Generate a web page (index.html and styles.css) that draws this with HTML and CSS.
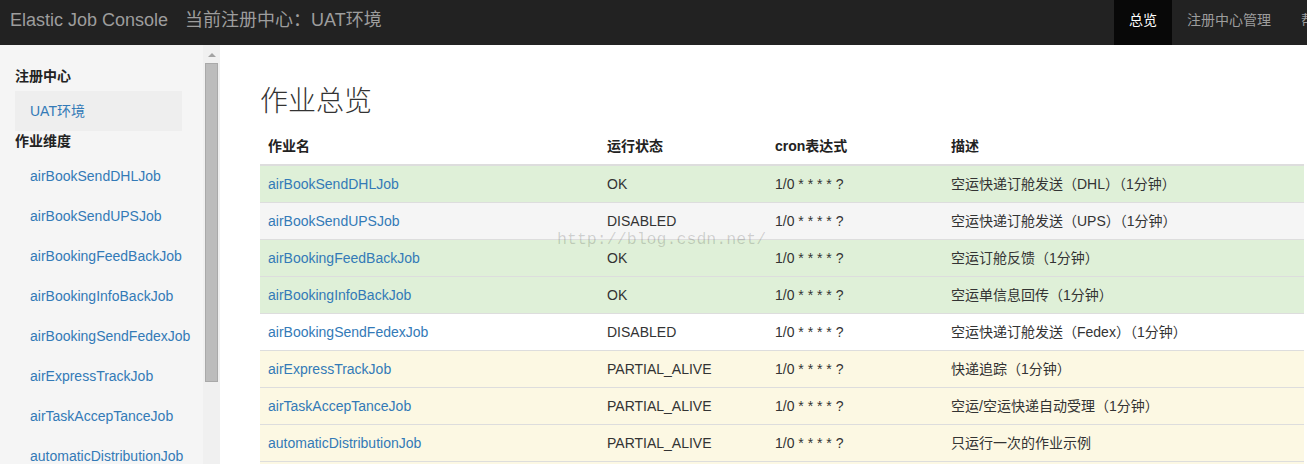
FILE: index.html
```html
<!DOCTYPE html>
<html lang="zh-CN">
<head>
<meta charset="utf-8">
<title>Elastic Job Console</title>
<link rel="stylesheet" href="styles.css">
</head>
<body>
<header class="navbar">
  <div class="brand">Elastic Job Console</div>
  <div class="current">当前注册中心：UAT环境</div>
  <ul class="nav-right">
    <li class="active"><a href="#">总览</a></li>
    <li><a href="#">注册中心管理</a></li>
    <li><a href="#">帮助</a></li>
  </ul>
</header>
<div class="layout">
  <aside class="sidebar">
    <div class="sidebar-content">
      <h4 class="nav-title">注册中心</h4>
      <ul class="nav-list">
        <li class="active"><a href="#">UAT环境</a></li>
      </ul>
      <h4 class="nav-title">作业维度</h4>
      <ul class="nav-list">
        <li><a href="#">airBookSendDHLJob</a></li>
        <li><a href="#">airBookSendUPSJob</a></li>
        <li><a href="#">airBookingFeedBackJob</a></li>
        <li><a href="#">airBookingInfoBackJob</a></li>
        <li><a href="#">airBookingSendFedexJob</a></li>
        <li><a href="#">airExpressTrackJob</a></li>
        <li><a href="#">airTaskAccepTanceJob</a></li>
        <li><a href="#">automaticDistributionJob</a></li>
      </ul>
    </div>
    <div class="scrollbar">
      <span class="arrow"></span>
      <span class="thumb"></span>
    </div>
  </aside>
  <main class="main">
    <h1 class="page-title">作业总览</h1>
    <div class="table-wrap">
      <table class="jobs">
        <colgroup>
          <col class="c-name"><col class="c-status"><col class="c-cron"><col class="c-desc">
        </colgroup>
        <thead>
          <tr><th>作业名</th><th>运行状态</th><th>cron表达式</th><th>描述</th></tr>
        </thead>
        <tbody>
          <tr class="success"><td><a href="#">airBookSendDHLJob</a></td><td>OK</td><td>1/0 * * * * ?</td><td>空运快递订舱发送（DHL）（1分钟）</td></tr>
          <tr class="muted"><td><a href="#">airBookSendUPSJob</a></td><td>DISABLED</td><td>1/0 * * * * ?</td><td>空运快递订舱发送（UPS）（1分钟）</td></tr>
          <tr class="success"><td><a href="#">airBookingFeedBackJob</a></td><td>OK</td><td>1/0 * * * * ?</td><td>空运订舱反馈（1分钟）</td></tr>
          <tr class="success"><td><a href="#">airBookingInfoBackJob</a></td><td>OK</td><td>1/0 * * * * ?</td><td>空运单信息回传（1分钟）</td></tr>
          <tr><td><a href="#">airBookingSendFedexJob</a></td><td>DISABLED</td><td>1/0 * * * * ?</td><td>空运快递订舱发送（Fedex）（1分钟）</td></tr>
          <tr class="warning"><td><a href="#">airExpressTrackJob</a></td><td>PARTIAL_ALIVE</td><td>1/0 * * * * ?</td><td>快递追踪（1分钟）</td></tr>
          <tr class="warning"><td><a href="#">airTaskAccepTanceJob</a></td><td>PARTIAL_ALIVE</td><td>1/0 * * * * ?</td><td>空运/空运快递自动受理（1分钟）</td></tr>
          <tr class="warning"><td><a href="#">automaticDistributionJob</a></td><td>PARTIAL_ALIVE</td><td>1/0 * * * * ?</td><td>只运行一次的作业示例</td></tr>
          <tr class="warning"><td><a href="#">autoTestJob</a></td><td>PARTIAL_ALIVE</td><td>1/0 * * * * ?</td><td>测试</td></tr>
        </tbody>
      </table>
      <div class="watermark">http://blog.csdn.net/</div>
    </div>
  </main>
</div>
</body>
</html>
```
FILE: styles.css
```css
* { box-sizing: border-box; }
html, body { margin: 0; padding: 0; height: 100%; overflow: hidden; }
body {
  font-family: "Liberation Sans", Arial, "Noto Sans CJK SC", sans-serif;
  font-size: 14px;
  line-height: 20px;
  color: #333;
  background: #fff;
}
a { color: #337ab7; text-decoration: none; }
ul { list-style: none; margin: 0; padding: 0; }

/* navbar */
.navbar {
  height: 45px;
  background: #222;
  display: flex;
  align-items: flex-start;
  overflow: hidden;
  white-space: nowrap;
}
.brand {
  padding: 10px 0 0 10px;
  font-size: 18px;
  color: #9d9d9d;
}
.current {
  padding: 10px 0 0 17px;
  font-size: 18px;
  color: #9d9d9d;
}
.nav-right {
  margin-left: auto;
  margin-right: -37px;
  display: flex;
  flex-shrink: 0;
}
.nav-right li a {
  display: block;
  height: 45px;
  padding: 10px 15px 0;
  color: #9d9d9d;
}
.nav-right li.active a {
  background: #080808;
  color: #fff;
}

/* layout */
.layout {
  display: flex;
  height: calc(100% - 45px);
}
.sidebar {
  width: 220px;
  flex-shrink: 0;
  display: flex;
  background: #f5f5f5;
  overflow: hidden;
}
.sidebar-content {
  width: 203px;
  padding: 21px 21px 0 15px;
}
.nav-title {
  margin: 0;
  font-size: 14px;
  line-height: 20px;
  font-weight: bold;
  color: #222;
}
.nav-list { margin-top: 5px; }
.nav-list li a {
  display: block;
  padding: 10px 15px;
  line-height: 20px;
  white-space: nowrap;
}
.nav-list li.active a { background: #eee; }

.scrollbar {
  width: 17px;
  background: #f0f0f0;
  display: flex;
  flex-direction: column;
  align-items: center;
  padding-top: 8px;
}
.arrow {
  width: 0;
  height: 0;
  border-left: 4px solid transparent;
  border-right: 4px solid transparent;
  border-bottom: 4px solid #a3a3a3;
}
.thumb {
  margin-top: 6px;
  width: 13px;
  height: 319px;
  background: #bcbcbc;
  border: 1px solid #a9a9a9;
}

/* main */
.main {
  flex: 1;
  padding: 39px 3px 0 40px;
  min-width: 0;
}
.page-title {
  margin: 0 0 8px;
  font-size: 28px;
  line-height: 36px;
  font-weight: 300;
  color: #333;
}
.table-wrap { position: relative; }
.jobs {
  width: 100%;
  border-collapse: collapse;
  table-layout: fixed;
}
.c-name { width: 339px; }
.c-status { width: 168px; }
.c-cron { width: 176px; }
.jobs th {
  text-align: left;
  font-weight: bold;
  padding: 8px;
  line-height: 20px;
  border-bottom: 2px solid #ddd;
  color: #222;
}
.jobs td {
  padding: 8px;
  line-height: 20px;
  border-top: 1px solid #ddd;
  white-space: nowrap;
}
.jobs tr.success td { background: #dff0d8; }
.jobs tr.muted td { background: #f5f5f5; }
.jobs tr.warning td { background: #fcf8e3; }

.watermark {
  position: absolute;
  left: 297px;
  top: 102px;
  font-family: "Liberation Mono", "Courier New", monospace;
  font-size: 16.6px;
  line-height: 20px;
  color: rgba(0, 0, 0, 0.16);
  pointer-events: none;
}
```
